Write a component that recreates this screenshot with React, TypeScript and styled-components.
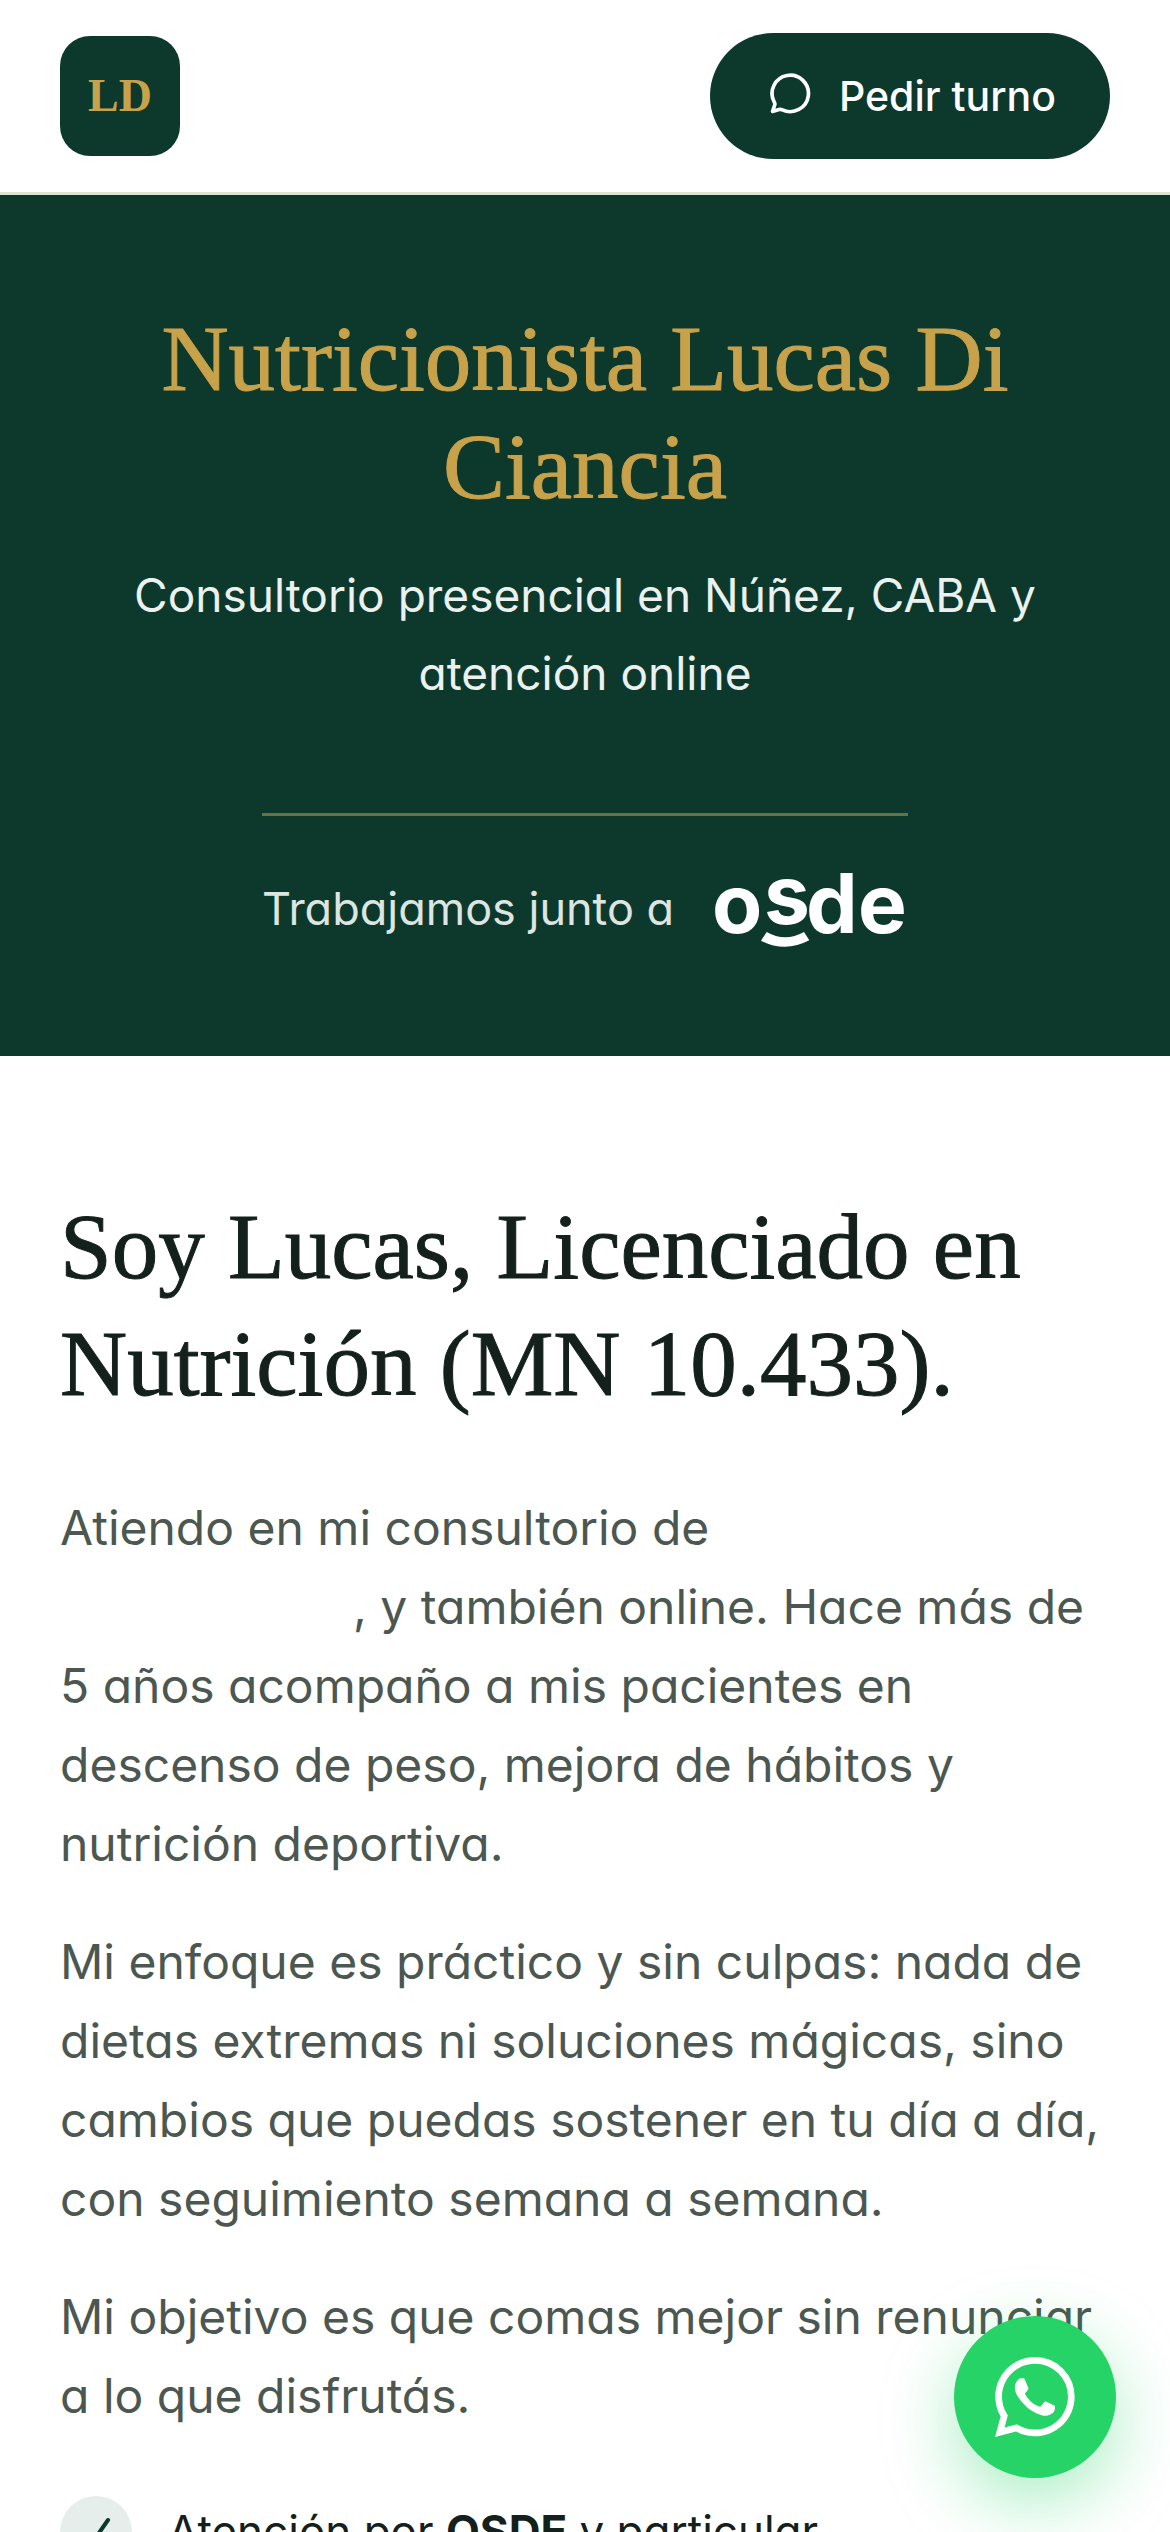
import React from "react";
import styled, { createGlobalStyle } from "styled-components";
import { BsWhatsapp } from "react-icons/bs";

const color = {
  green: "#0d392d",
  gold: "#c8a24a",
  ink: "#14201b",
  text: "#4b5750",
  mint: "#e5eeea",
  line: "#dde2d3",
  whatsapp: "#25d366",
};

const sans = `Inter, "Open Sans", sans-serif`;
const serif = `"Liberation Serif", serif`;

const GlobalStyle = createGlobalStyle`
  *, *::before, *::after { box-sizing: border-box; }
  html { scrollbar-width: none; }
  body {
    margin: 0;
    background: #fff;
    color: ${color.ink};
    font-family: ${sans};
    font-feature-settings: "cv11" 1;
  }
  h1, h2, p, ul { margin: 0; padding: 0; }
`;

const Header = styled.header`
  display: flex;
  align-items: center;
  justify-content: space-between;
  padding: 33px 60px;
  border-bottom: 3px solid ${color.line};
`;

const Logo = styled.a`
  display: grid;
  place-items: center;
  width: 120px;
  height: 120px;
  border-radius: 30px;
  background: ${color.green};
  color: ${color.gold};
  font: 700 46px/60px ${serif};
  text-decoration: none;
`;

const BookButton = styled.button`
  display: flex;
  align-items: center;
  gap: 28px;
  height: 126px;
  padding: 0 54px 0 60px;
  border: 0;
  border-radius: 63px;
  background: ${color.green};
  color: #fff;
  font: 500 41px/60px ${sans};
  font-feature-settings: inherit;
`;

const Hero = styled.section`
  display: flex;
  flex-direction: column;
  align-items: center;
  padding: 110px 60px 108px;
  background: ${color.green};
  text-align: center;
`;

const HeroTitle = styled.h1`
  color: ${color.gold};
  font: 400 93px/108px ${serif};
  -webkit-text-stroke: 1px currentColor;
`;

const HeroText = styled.p`
  margin-top: 35px;
  color: #eaf1ee;
  font-size: 46px;
  line-height: 78px;
`;

const Partner = styled.div`
  display: flex;
  align-items: center;
  gap: 39px;
  margin-top: 101px;
  padding-top: 54px;
  border-top: 3px solid #68713f;
  color: #dde5e1;
  font-size: 45px;
  line-height: 78px;
`;

const PartnerLogo = styled.svg`
  display: block;
  overflow: visible;
`;

const About = styled.section`
  padding: 132px 60px 108px;
`;

const AboutTitle = styled.h2`
  margin-bottom: 66px;
  font: 400 93px/117px ${serif};
  -webkit-text-stroke: 1px currentColor;
`;

const Paragraph = styled.p`
  margin-bottom: 39px;
  color: ${color.text};
  font-size: 48px;
  line-height: 79px;
`;

const PlaceGap = styled.span`
  display: inline-block;
  width: 293px;
`;

const Features = styled.ul`
  margin-top: 61px;
  list-style: none;
`;

const Feature = styled.li`
  display: flex;
  gap: 36px;
  font-size: 44px;
  line-height: 70px;
`;

const CheckBadge = styled.span`
  display: grid;
  flex: none;
  place-items: center;
  width: 72px;
  height: 72px;
  border-radius: 50%;
  background: ${color.mint};
`;

const WhatsappButton = styled.a`
  position: fixed;
  right: 54px;
  bottom: 54px;
  display: grid;
  place-items: center;
  width: 162px;
  height: 162px;
  border-radius: 50%;
  background: ${color.whatsapp};
  color: #fff;
  box-shadow: 0 24px 72px rgba(37, 211, 102, 0.4);
`;

const ChatIcon = () => (
  <svg width="41" height="46" viewBox="0 0 41 46" fill="none" aria-hidden="true">
    <path
      d="M12.3 36.8A18.2 18.2 0 1 0 4.2 29Q5.2 30.6 4.7 32L2.6 38.4L9 36.5Q10.7 36 12.3 36.8Z"
      stroke="currentColor"
      strokeWidth="3.7"
      strokeLinejoin="round"
    />
  </svg>
);

const OsdeLogo = () => (
  <PartnerLogo width="195" height="78" viewBox="0 0 195 78" fill="#fff" role="img" aria-label="osde">
    <text x="-1 51 93 145" y="63 54 63 63" fontFamily="Inter, sans-serif" fontWeight="700" fontSize="82">
      osde
    </text>
    <path d="M48 70.7L53.7 62Q72 72.5 91 62L96.3 70.3Q72 83 48 70.7Z" />
  </PartnerLogo>
);

const CheckIcon = () => (
  <svg width="36" height="36" viewBox="0 0 36 36" fill="none" aria-hidden="true">
    <path d="M6 20L14 29L30 6" stroke={color.green} strokeWidth="4" strokeLinecap="round" strokeLinejoin="round" />
  </svg>
);

export default function App() {
  return (
    <>
      <GlobalStyle />
      <Header>
        <Logo href="#">LD</Logo>
        <BookButton type="button">
          <ChatIcon />
          Pedir turno
        </BookButton>
      </Header>
      <main>
        <Hero>
          <HeroTitle>Nutricionista Lucas Di Ciancia</HeroTitle>
          <HeroText>Consultorio presencial en Núñez, CABA y atención online</HeroText>
          <Partner>
            <span>Trabajamos junto a</span>
            <OsdeLogo />
          </Partner>
        </Hero>
        <About>
          <AboutTitle>Soy Lucas, Licenciado en Nutrición (MN 10.433).</AboutTitle>
          <Paragraph>
            Atiendo en mi consultorio de
            <br />
            <PlaceGap />, y también online. Hace más de 5 años acompaño a mis pacientes en descenso de peso, mejora de
            hábitos y nutrición deportiva.
          </Paragraph>
          <Paragraph>
            Mi enfoque es práctico y sin culpas: nada de dietas extremas ni soluciones mágicas, sino cambios que puedas
            sostener en tu día a día, con seguimiento semana a semana.
          </Paragraph>
          <Paragraph>Mi objetivo es que comas mejor sin renunciar a lo que disfrutás.</Paragraph>
          <Features>
            <Feature>
              <CheckBadge>
                <CheckIcon />
              </CheckBadge>
              <span>
                Atención por <strong>OSDE</strong> y particular
              </span>
            </Feature>
          </Features>
        </About>
      </main>
      <WhatsappButton href="#" aria-label="WhatsApp">
        <BsWhatsapp size={80} />
      </WhatsappButton>
    </>
  );
}
